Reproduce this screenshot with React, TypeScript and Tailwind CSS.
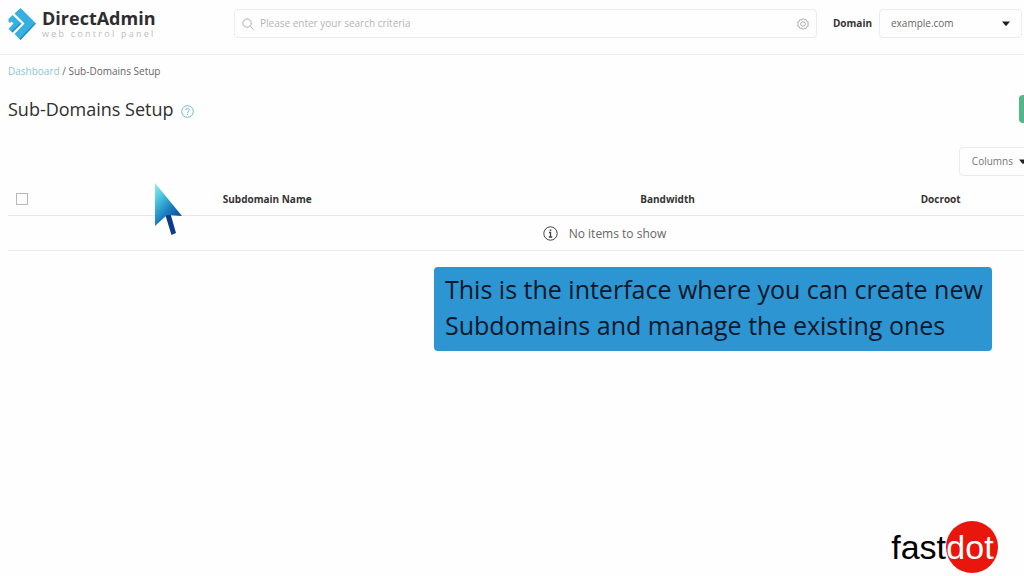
import type { ReactNode } from 'react'

function Logo() {
  return (
    <a href="#" className="flex w-[226px] shrink-0 items-start gap-1.5" aria-label="DirectAdmin web control panel">
      <svg width="28" height="33" viewBox="0 0 28 33" aria-hidden="true">
        <path d="M12.500 0 L28 15.500 L12.500 32 L6.500 26 L16.500 15.500 L6.500 5.500 Z" fill="#35b0e0" />
        <path d="M28 15.500 L12.500 32 L11.500 31 L26 15.500 Z" fill="#2a8dbb" />
        <path d="M4.500 7 L13.500 15.500 L4.500 24.500 L0.500 21 L5.500 15.500 L3.500 13.500 L2 15 L0.500 13.500 V11 Z" fill="#35b0e0" />
        <path d="M13.500 15.500 L4.500 24.500 L3.500 23.500 L11.500 15.500 Z" fill="#2a8dbb" />
      </svg>
      <span className="flex flex-col">
        <span className="text-[18px] leading-5 font-bold text-[#2d2d30]">DirectAdmin</span>
        <span className="text-[9px] leading-3 tracking-[0.25em] text-[#bdbdbd]">web control panel</span>
      </span>
    </a>
  )
}

function SearchIcon() {
  return (
    <svg width="12" height="12" viewBox="0 0 13 13" fill="none" stroke="#a6a6a6" aria-hidden="true">
      <circle cx="5.500" cy="5.500" r="4.500" />
      <path d="M9 9 L12.500 12.500" />
    </svg>
  )
}

function GearIcon() {
  return (
    <svg width="12" height="12" viewBox="0 0 24 24" fill="none" stroke="#999" strokeWidth="1.600" strokeLinejoin="round" aria-hidden="true">
      <path d="M12 1 L14.500 3.800 L18.200 2.900 L19.200 6.500 L22.700 8 L21.700 12 L22.700 16 L19.200 17.500 L18.200 21.100 L14.500 20.200 L12 23 L9.500 20.200 L5.800 21.100 L4.800 17.500 L1.300 16 L2.300 12 L1.300 8 L4.800 6.500 L5.800 2.900 L9.500 3.800 Z" />
      <circle cx="12" cy="12" r="4.500" />
    </svg>
  )
}

function Caret() {
  return (
    <svg width="8" height="5" viewBox="0 0 8 5" fill="#222" className="shrink-0" aria-hidden="true">
      <path d="M0 .5 H8 L4.500 4.800 H3.500 Z" />
    </svg>
  )
}

function HelpIcon() {
  return (
    <svg width="13" height="13" viewBox="0 0 13 13" fill="none" stroke="#6db9d0" aria-hidden="true">
      <circle cx="6.500" cy="6.500" r="5.800" />
      <path d="M4.800 5.200 C4.800 2.800 8.300 2.800 8.300 5 C8.300 6.300 6.500 6.300 6.500 8" />
      <path d="M6.500 9 V10" />
    </svg>
  )
}

function InfoIcon() {
  return (
    <svg width="15" height="15" viewBox="0 0 15 15" fill="none" stroke="#444" aria-hidden="true">
      <circle cx="7.500" cy="7.500" r="6.700" />
      <path d="M6 6.500 H7.500 V11 M5.800 11 H9.200" strokeWidth="1.300" />
      <path d="M7.500 3.500 V5" strokeWidth="1.600" />
    </svg>
  )
}

function Pointer() {
  return (
    <svg width="30" height="54" viewBox="0 0 30 54" className="absolute top-[183px] left-[154px]" aria-hidden="true">
      <defs>
        <linearGradient id="head" x1="0" y1="0" x2="0.700" y2="1">
          <stop offset="0" stopColor="#9af0ee" />
          <stop offset="0.350" stopColor="#45bedb" />
          <stop offset="0.650" stopColor="#1b7fc0" />
          <stop offset="1" stopColor="#0b4593" />
        </linearGradient>
      </defs>
      <path d="M11 31 L16 29 L22 50 L17.500 52 Z" fill="#0e3a8c" />
      <path d="M1 0 L28 33 L13 32 L1 43 Z" fill="url(#head)" />
    </svg>
  )
}

function HeadCell({ children }: { children: ReactNode }) {
  return <th className="p-0 text-left text-[10px] font-bold text-[#333]">{children}</th>
}

function Header() {
  return (
    <header className="flex h-[55px] items-start border-b border-[#ececec] pt-2 pr-0.5 pl-2">
      <Logo />
      <div className="mt-px flex h-[29px] flex-1 items-center gap-1.5 rounded-sm border border-[#ebebeb] px-[7px]">
        <SearchIcon />
        <input
          type="search"
          aria-label="Search"
          placeholder="Please enter your search criteria"
          className="min-w-0 flex-1 text-[10px] outline-none placeholder:text-[#b5b5b5]"
        />
        <button type="button" aria-label="Search settings"><GearIcon /></button>
      </div>
      <label htmlFor="domain" className="mt-px pr-[7px] pl-4 text-[10px] leading-[29px] font-bold text-[#333]">Domain</label>
      <div className="relative mt-px flex h-[29px] w-[143px] items-center">
        <select id="domain" className="h-full w-full appearance-none rounded-sm border border-[#ebebeb] pl-[11px] text-[10px] text-[#666]">
          <option>example.com</option>
        </select>
        <span className="pointer-events-none absolute right-3 flex"><Caret /></span>
      </div>
    </header>
  )
}

// wider than the window, the last column runs off to the right
function SubdomainTable() {
  return (
    <table className="w-[calc(100%+177px)] table-fixed border-collapse">
      <colgroup>
        <col className="w-[18%]" />
        <col className="w-[35%]" />
        <col />
        <col className="w-[23.500%]" />
      </colgroup>
      <thead>
        <tr className="h-[31px] border-b border-[#e8e8e8]">
          <th className="p-0 pl-2 text-left">
            <input type="checkbox" aria-label="Select all" className="block size-3 appearance-none border border-[#b8b8b8]" />
          </th>
          <HeadCell>Subdomain Name</HeadCell>
          <HeadCell>Bandwidth</HeadCell>
          <HeadCell>Docroot</HeadCell>
        </tr>
      </thead>
      <tbody>
        <tr className="h-[35px] border-b border-[#ececec]">
          <td colSpan={4} className="p-0 pt-0.5">
            <div className="flex items-center justify-center gap-[11px] text-[12px] text-[#666]">
              <InfoIcon />
              No items to show
            </div>
          </td>
        </tr>
      </tbody>
    </table>
  )
}

export default function App() {
  return (
    <div className="relative min-h-screen overflow-hidden bg-[#fefefe] font-['Open_Sans',sans-serif]">
      <Header />

      <main className="pl-2">
        <nav aria-label="Breadcrumb" className="pt-2 text-[10px] leading-4 text-[#666]">
          <a href="#" className="text-[#8fc5d6]">Dashboard</a> / Sub-Domains Setup
        </nav>

        <div className="mt-4 flex h-7 items-center justify-between">
          <div className="flex items-center gap-[7px]">
            <h1 className="text-[18px] leading-7 text-[#2f2f2f]">Sub-Domains Setup</h1>
            <button type="button" aria-label="Help" className="pt-1"><HelpIcon /></button>
          </div>
          <button type="button" aria-label="Add new" className="-mr-6 h-7 w-[29px] rounded-sm bg-[#52b788]" />
        </div>

        <div className="mt-6 flex justify-end">
          <button type="button" className="-mr-[18px] flex h-[29px] items-center gap-1.5 rounded-sm border border-[#ebebeb] pr-3.5 pl-3 text-[10px] text-[#777]">
            Columns
            <Caret />
          </button>
        </div>

        <div className="mt-2">
          <SubdomainTable />
        </div>
      </main>

      <Pointer />

      <p className="absolute top-[267px] right-8 w-[558px] rounded-sm bg-[#2d95d1] pt-1 pb-2 pl-[11px] text-[25px] leading-9 text-[#06182b]">
        This is the interface where you can create new Subdomains and manage the existing ones
      </p>

      <div className="absolute right-[26px] bottom-[3px] flex items-center font-['Liberation_Sans',sans-serif] text-[34px] leading-none text-black">
        fast
        <span className="flex size-[52px] items-center justify-center rounded-full bg-[#e8160c] pr-1 text-white">dot</span>
      </div>
    </div>
  )
}
